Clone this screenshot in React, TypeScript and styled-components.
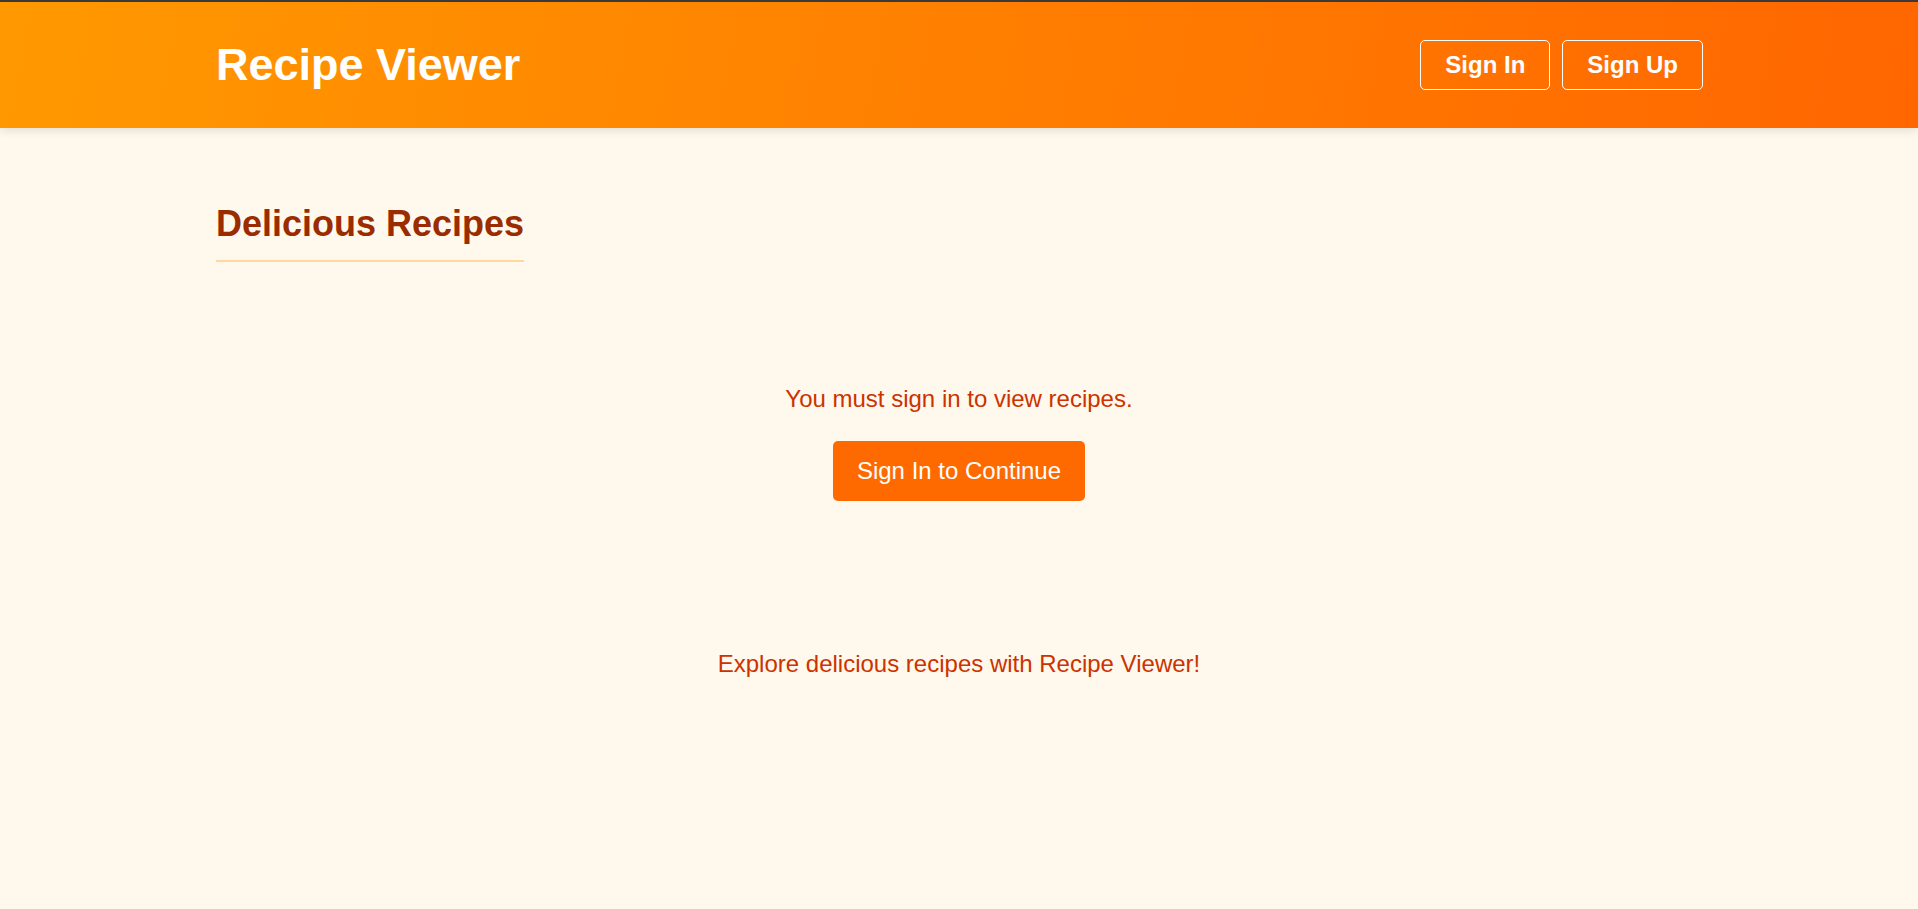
import React from "react";
import styled, { createGlobalStyle } from "styled-components";

const GlobalStyle = createGlobalStyle`
  html, body {
    margin: 0;
    padding: 0;
    background: #fff8ec;
    font-family: "Liberation Sans", Arial, sans-serif;
  }
  * { box-sizing: border-box; }
`;

const Page = styled.div`
  min-height: 909px;
  background: #fff8ec;
`;

const Header = styled.header`
  height: 128px;
  border-top: 2px solid #3a3a3a;
  background: linear-gradient(100deg, #ff9900 0%, #ff6600 100%);
  box-shadow: 0 2px 10px rgba(0, 0, 0, 0.12);
  display: flex;
  align-items: center;
  justify-content: space-between;
  padding: 0 215px 0 216px;
`;

const Brand = styled.h1`
  margin: 0;
  font-size: 45px;
  font-weight: 700;
  color: #ffffff;
  line-height: normal;
`;

const Nav = styled.nav`
  display: flex;
  gap: 12px;
`;

const NavButton = styled.button`
  font-family: inherit;
  font-size: 24px;
  font-weight: 700;
  color: #ffffff;
  background: transparent;
  border: 1px solid #ffffff;
  border-radius: 5px;
  padding: 10px 24px;
  line-height: normal;
  cursor: pointer;
`;

const Main = styled.main`
  padding: 0 216px;
`;

const Title = styled.h2`
  display: inline-block;
  margin: 75px 0 0;
  padding-bottom: 15px;
  border-bottom: 2px solid #ffd79f;
  font-size: 36px;
  font-weight: 700;
  color: #9a2c00;
  line-height: normal;
`;

const Gate = styled.section`
  display: flex;
  flex-direction: column;
  align-items: center;
  padding-top: 123px;
`;

const Message = styled.p`
  margin: 0 0 28px;
  font-size: 24px;
  color: #cc3300;
  line-height: normal;
`;

const PrimaryButton = styled.button`
  font-family: inherit;
  font-size: 24px;
  color: #ffffff;
  background: #ff6a00;
  border: none;
  border-radius: 5px;
  padding: 16px 24px;
  line-height: normal;
  cursor: pointer;
`;

const Footer = styled.footer`
  margin-top: 149px;
  text-align: center;
  font-size: 24px;
  color: #cc3300;
  line-height: normal;
`;

export default function App() {
  return (
    <>
      <GlobalStyle />
      <Page>
        <Header>
          <Brand>Recipe Viewer</Brand>
          <Nav>
            <NavButton>Sign In</NavButton>
            <NavButton>Sign Up</NavButton>
          </Nav>
        </Header>
        <Main>
          <Title>Delicious Recipes</Title>
          <Gate>
            <Message>You must sign in to view recipes.</Message>
            <PrimaryButton>Sign In to Continue</PrimaryButton>
          </Gate>
        </Main>
        <Footer>Explore delicious recipes with Recipe Viewer!</Footer>
      </Page>
    </>
  );
}
